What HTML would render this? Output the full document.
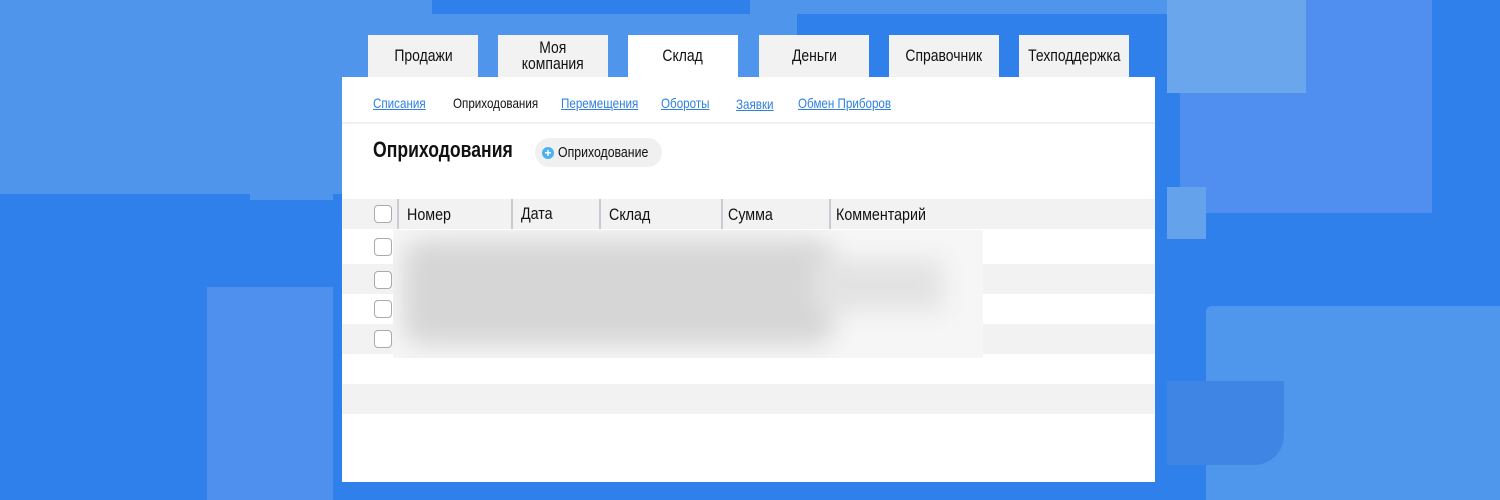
<!DOCTYPE html>
<html><head><meta charset="utf-8"><style>
*{margin:0;padding:0;box-sizing:border-box}
body{width:1500px;height:500px;overflow:hidden;background:#2f80ea;position:relative;font-family:"Liberation Sans",sans-serif;color:#111}
.a{position:absolute}
.n{display:inline-block;transform:scaleX(0.82);transform-origin:left center;white-space:nowrap}
.tab{position:absolute;top:35px;height:42px;width:110px;background:#f2f2f2;display:flex;align-items:center;justify-content:center;text-align:center;font-size:17px;line-height:16px}
.tab span{display:inline-block;transform:scaleX(0.82);white-space:nowrap}
.sub{position:absolute;top:95px;font-size:14px;color:#2f7fe0;text-decoration:underline;transform:scaleX(0.83);transform-origin:left center;white-space:nowrap}
.cb{position:absolute;left:374px;width:18px;height:18px;border:1.5px solid #aaa;border-radius:4px;background:#fff}
.th{position:absolute;top:205px;font-size:17px;transform:scaleX(0.84);transform-origin:left center;white-space:nowrap}
.vd{position:absolute;top:199px;height:30px;width:2px;background:#c8ccd2}
</style></head><body>
<div class="a" style="left:0;top:0;width:1167px;height:194px;background:#4f95ec"></div>
<div class="a" style="left:250px;top:0;width:83px;height:200px;background:#4f95ec"></div>
<div class="a" style="left:432px;top:0;width:318px;height:14px;background:#2f80ea"></div>
<div class="a" style="left:797px;top:14px;width:370px;height:180px;background:#2f80ea"></div>
<div class="a" style="left:1180px;top:0;width:252px;height:213px;background:#508ff0"></div>
<div class="a" style="left:1167px;top:0;width:139px;height:93px;background:#6aa6ec"></div>
<div class="a" style="left:1167px;top:187px;width:39px;height:52px;background:#65a2ec"></div>
<div class="a" style="left:1206px;top:306px;width:294px;height:194px;background:#4f97ec;border-top-left-radius:6px"></div>
<div class="a" style="left:1167px;top:381px;width:117px;height:84px;background:#3f86e4;border-bottom-right-radius:30px"></div>
<div class="a" style="left:207px;top:287px;width:126px;height:213px;background:#4f8fee"></div>

<div class="tab" style="left:368px"><span>Продажи</span></div>
<div class="tab" style="left:498px"><span>Моя<br>компания</span></div>
<div class="tab" style="left:628px;background:#fff"><span>Склад</span></div>
<div class="tab" style="left:759px"><span>Деньги</span></div>
<div class="tab" style="left:889px"><span>Справочник</span></div>
<div class="tab" style="left:1019px"><span>Техподдержка</span></div>

<div class="a" style="left:342px;top:77px;width:813px;height:405px;background:#fff"></div>
<div class="sub" style="left:373px">Списания</div>
<div class="sub" style="left:453px;color:#111;text-decoration:none">Оприходования</div>
<div class="sub" style="left:561px">Перемещения</div>
<div class="sub" style="left:661px">Обороты</div>
<div class="sub" style="left:736px;top:96px">Заявки</div>
<div class="sub" style="left:798px">Обмен Приборов</div>
<div class="a" style="left:342px;top:122px;width:813px;height:2px;background:#f0f0f0"></div>

<div class="a" style="left:373px;top:137px;font-size:22px;font-weight:bold"><span class="n" style="transform:scaleX(0.8)">Оприходования</span></div>
<div class="a" style="left:535px;top:138px;width:127px;height:29px;border-radius:15px;background:#f0f0f0;font-size:15px;line-height:29px;padding-left:23px"><span class="n" style="transform:scaleX(0.82)">Оприходование</span></div>
<div class="a" style="left:542px;top:147px;width:12px;height:12px;border-radius:50%;background:#4fb1ec;color:#fff;font-size:12px;line-height:12px;text-align:center;font-weight:bold">+</div>

<div class="a" style="left:342px;top:199px;width:813px;height:30px;background:#f2f2f2"></div>
<div class="a" style="left:342px;top:264px;width:813px;height:30px;background:#f2f2f2"></div>
<div class="a" style="left:342px;top:324px;width:813px;height:30px;background:#f2f2f2"></div>
<div class="a" style="left:342px;top:384px;width:813px;height:30px;background:#f2f2f2"></div>
<div class="vd" style="left:397px"></div><div class="vd" style="left:511px"></div><div class="vd" style="left:599px"></div><div class="vd" style="left:721px"></div><div class="vd" style="left:829px"></div>
<div class="th" style="left:407px">Номер</div>
<div class="th" style="left:521px;top:204px">Дата</div>
<div class="th" style="left:609px">Склад</div>
<div class="th" style="left:728px">Сумма</div>
<div class="th" style="left:836px">Комментарий</div>
<div class="cb" style="top:205px"></div>
<div class="cb" style="top:238px"></div>
<div class="cb" style="top:271px"></div>
<div class="cb" style="top:300px"></div>
<div class="cb" style="top:330px"></div>
<div class="a" style="left:393px;top:230px;width:590px;height:128px;background:#f6f6f6;overflow:hidden">
<div class="a" style="left:10px;top:10px;width:430px;height:105px;background:#d6d6d6;filter:blur(12px);border-radius:20px"></div>
<div class="a" style="left:420px;top:30px;width:130px;height:50px;background:#e2e2e2;filter:blur(12px)"></div>
</div>
</body></html>
